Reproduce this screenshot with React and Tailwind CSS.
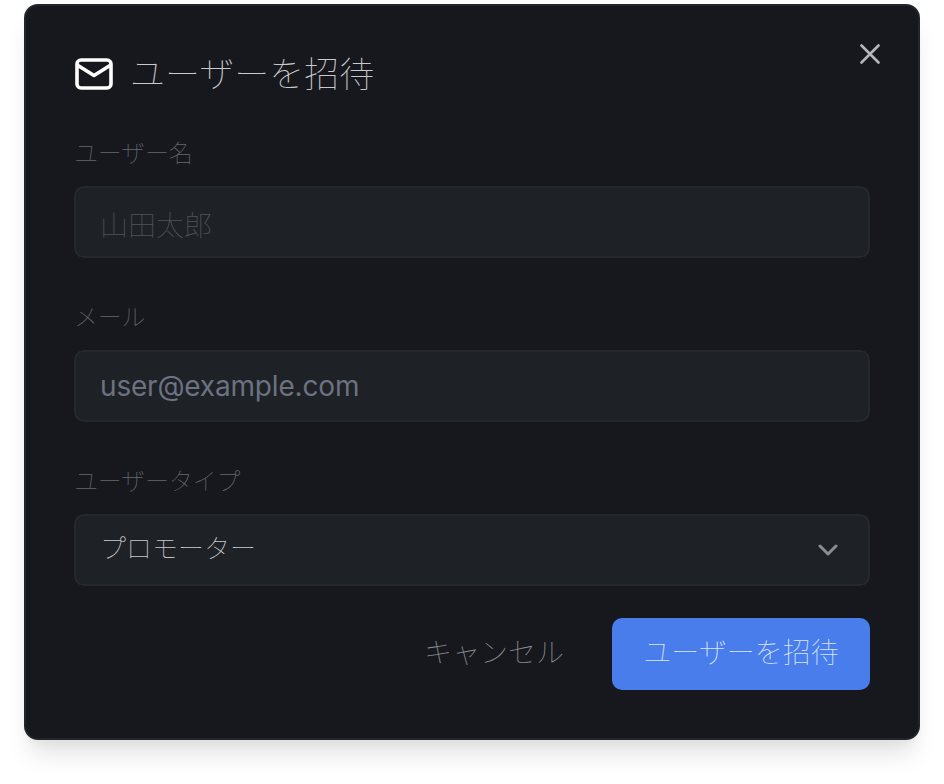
import React from 'react';

const cjk = "font-['Inter','Noto_Sans_CJK_JP',sans-serif]";

function Field({ label, children, className }) {
  return (
    <div className={className}>
      <label className="block h-[32px] text-[24px] leading-[32px] font-thin tracking-[-0.2px] text-[#67696d]">{label}</label>
      <div className="mt-[16px]">{children}</div>
    </div>
  );
}

function App() {
  return (
    <div className={`w-[944px] h-[784px] bg-white pt-[4px] pl-[24px] ${cjk}`}>
      <div className="relative w-[896px] h-[736px] rounded-[14px] border-2 border-[#22252b] bg-[#16181d] px-[48px] pt-[48px] shadow-[0_20px_25px_-5px_rgba(0,0,0,0.1),0_10px_10px_-5px_rgba(0,0,0,0.04)]">
        <button className="absolute right-[38px] top-[38px] text-[#b4b6ba]">
          <svg width="20" height="20" viewBox="0 0 20 20" fill="none" stroke="currentColor" strokeWidth="2.6" strokeLinecap="round">
            <path d="M1.5 1.5 18.5 18.5M18.5 1.5 1.5 18.5" />
          </svg>
        </button>

        <div className="flex items-center h-[40px]">
          <svg className="ml-[1px]" width="38" height="32" viewBox="0 0 38 32" fill="none" stroke="#ffffff" strokeWidth="3.6" strokeLinecap="round" strokeLinejoin="round">
            <rect x="2" y="2" width="34" height="28" rx="4" />
            <path d="M3 7.5 19 17.5 35 7.5" />
          </svg>
          <h2 className="ml-[17px] text-[35px] leading-[40px] font-thin text-[#c9cacc]">ユーザーを招待</h2>
        </div>

        <Field label="ユーザー名" className="mt-[44px]">
          <input
            readOnly
            placeholder="山田太郎"
            className="w-full h-[72px] rounded-[10px] border-2 border-[#25282e] bg-[#1e2126] px-[24px] pt-[8px] text-[28px] font-thin outline-none placeholder:text-[#505357]"
          />
        </Field>

        <Field label="メール" className="mt-[44px]">
          <input
            readOnly
            placeholder="user@example.com"
            className="w-full h-[72px] rounded-[10px] border-2 border-[#25282e] bg-[#1e2126] px-[24px] text-[28px] font-normal tracking-[-0.18px] outline-none placeholder:text-[#6b7280]"
          />
        </Field>

        <Field label="ユーザータイプ" className="mt-[44px]">
          <div className="flex items-center justify-between w-full h-[72px] rounded-[10px] border-2 border-[#25282e] bg-[#1e2126] pl-[24px] pr-[30px] text-[26px] font-thin text-[#c9cacc]">
            <span className="pb-[4px]">プロモーター</span>
            <svg width="20" height="12" viewBox="0 0 20 12" fill="none" stroke="#8b8d91" strokeWidth="3" strokeLinecap="round" strokeLinejoin="round">
              <path d="M2 2 10 10 18 2" />
            </svg>
          </div>
        </Field>

        <div className="mt-[32px] flex items-center justify-end">
          <button className="mr-[48px] pb-[2px] text-[28px] font-thin text-[#8b8c8f]">キャンセル</button>
          <button className="w-[258px] h-[72px] rounded-[10px] bg-[#487deb] pb-[2px] text-[28px] font-thin text-[#dbe6fb]">ユーザーを招待</button>
        </div>
      </div>
    </div>
  );
}

export default App;
